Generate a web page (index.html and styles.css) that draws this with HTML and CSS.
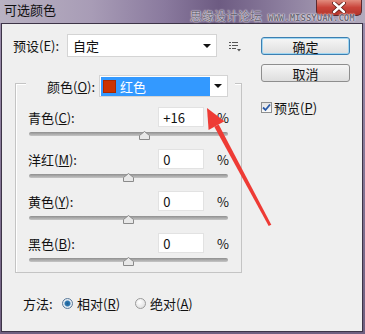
FILE: index.html
```html
<!DOCTYPE html>
<html lang="zh-CN">
<head>
    <meta charset="UTF-8">
    <meta name="viewport" content="width=device-width, initial-scale=1.0">
    <title>可选颜色</title>
    <link rel="stylesheet" href="styles.css">
</head>
<body>
    <div class="window">
        <!-- Title bar -->
        <div class="titlebar">
            <span class="title">可选颜色</span>
            <div class="close-btn">
                <svg width="14" height="11" viewBox="0 0 14 11">
                    <path d="M2 1 L12 10 M12 1 L2 10" stroke="#5a1810" stroke-width="4" stroke-linecap="round"/>
                    <path d="M2 1 L12 10 M12 1 L2 10" stroke="#fff" stroke-width="2.4" stroke-linecap="round"/>
                </svg>
            </div>
            <div class="watermark">
                <span class="wm-cn">思缘设计论坛</span>
                <span class="wm-en">WWW.MISSYUAN.COM</span>
            </div>
        </div>

        <!-- Dialog body -->
        <div class="dialog">
            <div class="main-col">
                <div class="preset-row">
                    <span class="preset-label">预设(E):</span>
                    <div class="select preset-select">
                        <span>自定</span>
                        <span class="caret"></span>
                    </div>
                    <svg class="menu-icon" width="12" height="10" viewBox="0 0 12 10">
                        <rect x="0" y="0" width="2" height="1" fill="#555"/>
                        <rect x="3" y="0" width="6" height="1" fill="#555"/>
                        <rect x="0" y="3" width="2" height="1" fill="#555"/>
                        <rect x="3" y="3" width="6" height="1" fill="#555"/>
                        <rect x="0" y="6" width="2" height="1" fill="#555"/>
                        <rect x="3" y="6" width="4" height="1" fill="#555"/>
                        <path d="M8 7 L12 7 L10 9.5 Z" fill="#555"/>
                    </svg>
                </div>

                <div class="group">
                    <div class="group-head">
                        <span class="group-label">颜色(<u>O</u>):</span>
                        <div class="select color-select">
                            <div class="color-chosen">
                                <span class="swatch"></span>
                                <span>红色</span>
                            </div>
                            <span class="caret"></span>
                        </div>
                    </div>

                    <div class="slider-row">
                        <div class="slider-line">
                            <span class="slider-label">青色(<u>C</u>):</span>
                            <div class="num-box">+16</div>
                            <span class="pct">%</span>
                        </div>
                        <div class="track"><svg class="thumb" style="left:110px" width="11" height="9" viewBox="0 0 11 9"><path d="M0.5 8.5 L0.5 4.5 L5.5 0.5 L10.5 4.5 L10.5 8.5 Z" fill="#e8e8e8" stroke="#8a8a8a"/></svg></div>
                    </div>

                    <div class="slider-row">
                        <div class="slider-line">
                            <span class="slider-label">洋红(<u>M</u>):</span>
                            <div class="num-box">0</div>
                            <span class="pct">%</span>
                        </div>
                        <div class="track"><svg class="thumb" style="left:94px" width="11" height="9" viewBox="0 0 11 9"><path d="M0.5 8.5 L0.5 4.5 L5.5 0.5 L10.5 4.5 L10.5 8.5 Z" fill="#e8e8e8" stroke="#8a8a8a"/></svg></div>
                    </div>

                    <div class="slider-row">
                        <div class="slider-line">
                            <span class="slider-label">黄色(<u>Y</u>):</span>
                            <div class="num-box">0</div>
                            <span class="pct">%</span>
                        </div>
                        <div class="track"><svg class="thumb" style="left:94px" width="11" height="9" viewBox="0 0 11 9"><path d="M0.5 8.5 L0.5 4.5 L5.5 0.5 L10.5 4.5 L10.5 8.5 Z" fill="#e8e8e8" stroke="#8a8a8a"/></svg></div>
                    </div>

                    <div class="slider-row">
                        <div class="slider-line">
                            <span class="slider-label">黑色(<u>B</u>):</span>
                            <div class="num-box">0</div>
                            <span class="pct">%</span>
                        </div>
                        <div class="track"><svg class="thumb" style="left:94px" width="11" height="9" viewBox="0 0 11 9"><path d="M0.5 8.5 L0.5 4.5 L5.5 0.5 L10.5 4.5 L10.5 8.5 Z" fill="#e8e8e8" stroke="#8a8a8a"/></svg></div>
                    </div>
                </div>

                <div class="method-row">
                    <span class="method-label">方法:</span>
                    <span class="radio checked"></span>
                    <span class="radio-text">相对(<u>R</u>)</span>
                    <span class="radio"></span>
                    <span class="radio-text">绝对(<u>A</u>)</span>
                </div>
            </div>

            <div class="side-col">
                <div class="btn btn-default">确定</div>
                <div class="btn">取消</div>
                <div class="check-row">
                    <span class="checkbox">
                        <svg width="9" height="9" viewBox="0 0 9 9"><path d="M1 4.5 L3.5 7 L8 1.5" fill="none" stroke="#2a5aa8" stroke-width="1.8"/></svg>
                    </span>
                    <span>预览(<u>P</u>)</span>
                </div>
            </div>
        </div>

        <!-- Red annotation arrow -->
        <svg class="arrow" width="365" height="334" viewBox="0 0 365 334">
            <polygon points="207,108 224.4,121.3 208.6,129.9" fill="#ee3b35"/>
            <polygon points="214.3,126.8 218.7,124.4 271.3,224.7 268.7,226" fill="#ee3b35"/>
        </svg>
    </div>
</body>
</html>
```

FILE: styles.css
```css
* {
    box-sizing: border-box;
}

body {
    margin: 0;
    font-family: "Noto Sans CJK SC", "Liberation Sans", sans-serif;
    font-size: 13px;
    color: #111;
    background: #7d6d8c;
}

u {
    text-decoration: underline;
    text-underline-offset: 1px;
}

.window {
    position: relative;
    width: 365px;
    height: 334px;
    display: flex;
    flex-direction: column;
    padding: 0 2px 2px 1px;
    background: linear-gradient(to bottom, #9d8fae, #6f5f80);
}

/* Title bar */
.titlebar {
    position: relative;
    height: 23px;
    margin: 0 -2px 0 -1px;
    display: flex;
    align-items: flex-start;
    background: linear-gradient(to right, #b9b2c2 0%, #a89cb6 25%, #8a7a9e 45%, #6d5b82 60%, #8d7f9f 78%, #b3abbd 100%);
}

.title {
    padding: 1px 0 0 4px;
    font-size: 13px;
    line-height: 18px;
    color: #101010;
}

.close-btn {
    margin-left: auto;
    margin-right: 3px;
    width: 46px;
    height: 16px;
    display: flex;
    align-items: center;
    justify-content: center;
    background: linear-gradient(to bottom, #e28c7e, #c9443a 50%, #b3352a);
    border: 1px solid #5b2a2e;
    border-top: none;
    border-radius: 0 0 5px 5px;
}

.watermark {
    position: absolute;
    left: 190px;
    top: 9px;
    display: flex;
    align-items: baseline;
    gap: 6px;
    color: #6e6a78;
    text-shadow: 0 0 2px #fff, 0 0 1px #fff;
}

.wm-cn {
    font-size: 12px;
    line-height: 14px;
}

.wm-en {
    font-family: "DejaVu Sans Mono", monospace;
    font-size: 9px;
    font-weight: bold;
}

/* Dialog */
.dialog {
    flex: 1;
    display: flex;
    gap: 19px;
    padding: 10px 0 0 11px;
    background: #efefef;
    border: 1px solid #3d3447;
}

.main-col {
    width: 229px;
    display: flex;
    flex-direction: column;
}

.preset-row {
    height: 23px;
    display: flex;
    align-items: center;
}

.preset-label {
    width: 54px;
}

.select {
    position: relative;
    display: flex;
    align-items: center;
    background: #fff;
    border: 1px solid #d4d4d4;
}

.preset-select {
    width: 150px;
    height: 23px;
    padding-left: 5px;
}

.caret {
    position: absolute;
    right: 5px;
    top: 50%;
    margin-top: -2px;
    border-left: 4px solid transparent;
    border-right: 4px solid transparent;
    border-top: 4px solid #111;
}

.menu-icon {
    margin-left: 12px;
    margin-top: 3px;
}

/* Color group */
.group {
    margin: 26px 0 0 2px;
    width: 227px;
    height: 190px;
    border: 1px solid #c4c4c4;
    box-shadow: inset 1px 1px 0 #fff;
    display: flex;
    flex-direction: column;
}

.group-head {
    margin: -9px 0 0 10px;
    width: 209px;
    height: 22px;
    padding: 0 6px 0 21px;
    display: flex;
    align-items: center;
    background: #efefef;
}

.group-label {
    width: 52px;
}

.color-select {
    width: 129px;
    height: 22px;
    padding: 1px;
}

.color-chosen {
    width: 109px;
    height: 19px;
    display: flex;
    align-items: center;
    gap: 4px;
    padding-left: 2px;
    background: #3399ff;
    color: #fff;
}

.swatch {
    width: 13px;
    height: 13px;
    background: #cc3300;
    border: 1px solid #a82800;
}

.slider-row {
    margin-top: 8px;
    padding: 0 12px 0 12px;
}

.group-head + .slider-row {
    margin-top: 10px;
}

.slider-line {
    height: 20px;
    display: flex;
    align-items: center;
}

.slider-label {
    width: 131px;
}

.num-box {
    width: 46px;
    height: 20px;
    padding-left: 4px;
    line-height: 20px;
    background: #fff;
    border: 1px solid #e2e2e2;
}

.pct {
    margin-left: 13px;
}

.track {
    position: relative;
    margin: 5px 0 5px 1px;
    width: 199px;
    height: 4px;
    border-radius: 2px;
    background: linear-gradient(to bottom, #8f8f8f, #c6c6c6);
}

.thumb {
    position: absolute;
    top: -1px;
}

/* Method radios */
.method-row {
    margin: 22px 0 0 10px;
    display: flex;
    align-items: center;
    height: 16px;
}

.method-label {
    width: 39px;
}

.radio {
    width: 11px;
    height: 11px;
    border-radius: 50%;
    border: 1px solid #9a9a9a;
    background: radial-gradient(circle at 40% 35%, #fff, #d8d8d8);
}

.radio.checked {
    border-color: #5a7a9a;
    background: radial-gradient(circle, #1f5d8f 0, #2d7ab5 2.5px, #e8eef4 3.5px, #cfd8e2 100%);
}

.radio-text {
    margin-left: 4px;
    width: 58px;
}

/* Side buttons */
.side-col {
    width: 89px;
    display: flex;
    flex-direction: column;
    padding-top: 3px;
}

.btn {
    height: 18px;
    display: flex;
    align-items: center;
    justify-content: center;
    margin-bottom: 9px;
    background: linear-gradient(to bottom, #f6f6f6, #dedede);
    border: 1px solid #8e8e8e;
    border-radius: 3px;
}

.btn-default {
    border-color: #3c7fb1;
    box-shadow: inset 0 0 0 1px #9fd6f2;
}

.check-row {
    margin-top: 7px;
    display: flex;
    align-items: center;
    gap: 2px;
}

.checkbox {
    width: 11px;
    height: 11px;
    display: flex;
    align-items: center;
    justify-content: center;
    background: linear-gradient(to bottom, #e4e4e4, #fafafa);
    border: 1px solid #8e8f8f;
}

/* Annotation */
.arrow {
    position: absolute;
    left: 0;
    top: 0;
    pointer-events: none;
}
```
